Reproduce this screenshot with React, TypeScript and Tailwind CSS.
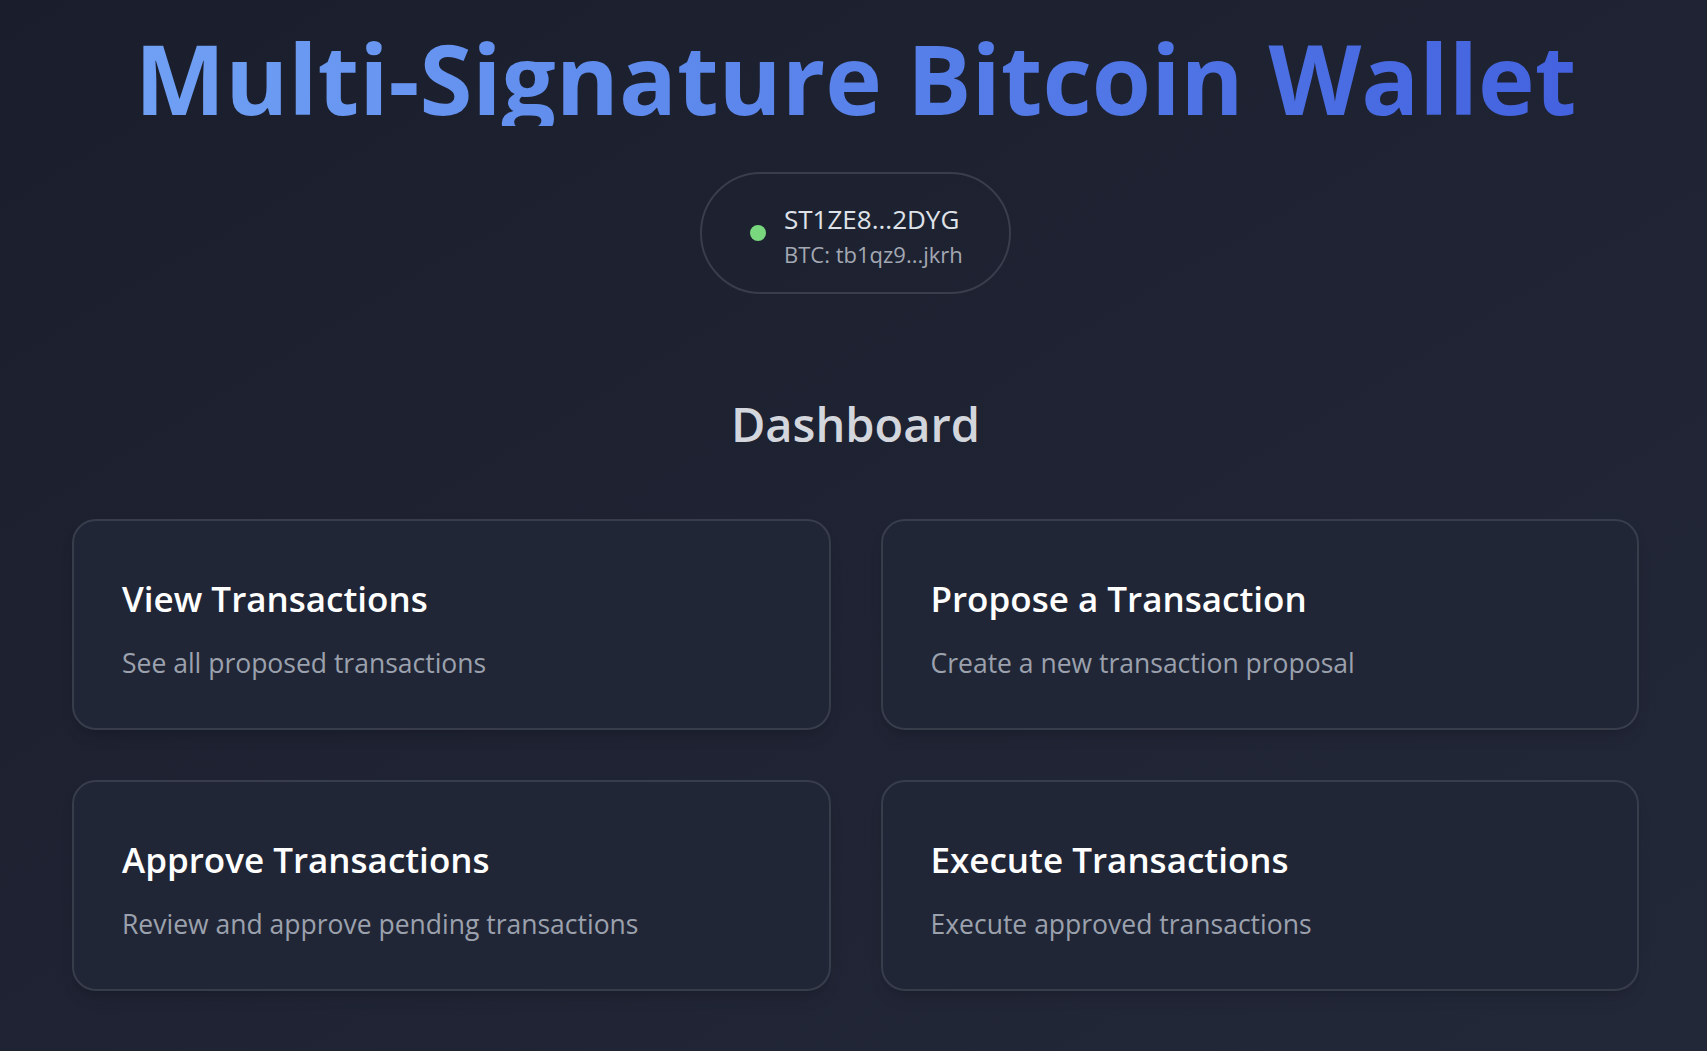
const cards = [
  { title: 'View Transactions', desc: 'See all proposed transactions' },
  { title: 'Propose a Transaction', desc: 'Create a new transaction proposal' },
  { title: 'Approve Transactions', desc: 'Review and approve pending transactions' },
  { title: 'Execute Transactions', desc: 'Execute approved transactions' },
];

export default function App() {
  return (
    <div
      className="min-h-screen w-full bg-gradient-to-br from-[#1a1e2c] to-[#232839] pl-[72px] pr-[68px] pt-[30px] pb-[61px]"
      style={{ fontFamily: '"Open Sans", "Noto Sans", sans-serif' }}
    >
      <header className="flex flex-col items-center">
        <h1 className="w-fit bg-gradient-to-r from-[#70a0f4] to-[#4462df] bg-clip-text text-[96px] font-bold leading-none text-transparent">
          Multi-Signature Bitcoin Wallet
        </h1>

        {/* connected account */}
        <div className="mt-[46px] flex h-[122px] w-[311px] items-center gap-[18px] rounded-full border-2 border-[#393e4d] bg-[#1e2231]/40 pl-[48px] pr-[40px]">
          <span className="h-[16px] w-[16px] shrink-0 rounded-full bg-[#79d87e]" />
          <div className="mt-[3px] flex flex-col">
            <span className="text-[26px] leading-[38px] text-[#dfe2e8]">ST1ZE8...2DYG</span>
            <span className="text-[22px] leading-[32px] text-[#a3a8b3]">BTC: tb1qz9...jkrh</span>
          </div>
        </div>
      </header>

      <main className="mt-[101px]">
        <h2 className="text-center text-[47px] font-semibold leading-[58px] text-[#d3d6dc]">Dashboard</h2>

        <div className="mt-[66px] grid grid-cols-2 gap-[50px]">
          {cards.map((card) => (
            <button
              key={card.title}
              type="button"
              className="flex h-[211px] flex-col rounded-[24px] border-2 border-[#383d4c] bg-[#212636] px-[48px] pt-[51px] text-left shadow-lg shadow-black/10 transition-colors hover:border-[#4a5063]"
            >
              <h3 className="text-[35px] font-semibold leading-[54px] text-white">{card.title}</h3>
              <p className="mt-[16px] text-[26.5px] leading-[42px] text-[#9ba1ad]">{card.desc}</p>
            </button>
          ))}
        </div>
      </main>
    </div>
  );
}
